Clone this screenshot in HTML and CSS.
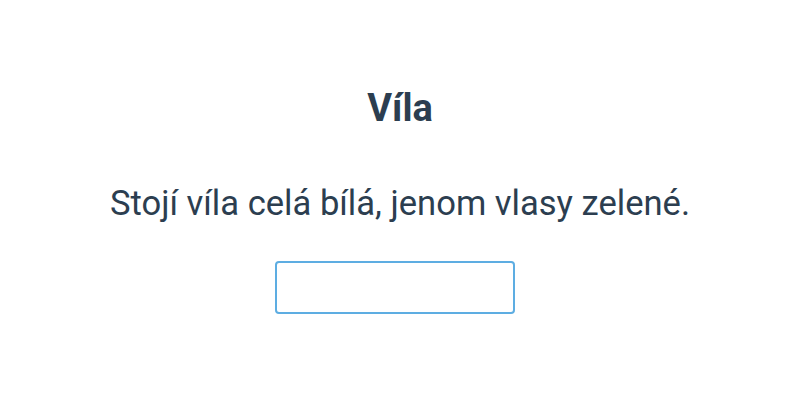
FILE: index.html
```html
<!DOCTYPE html>
<html>
<head>
<meta charset="utf-8">
<link rel="stylesheet" href="styles.css">
</head>
<body>
<div class="page">
  <h1 class="title">Víla</h1>
  <p class="text">Stojí víla celá bílá, jenom vlasy zelené.</p>
  <input class="answer" type="text">
</div>
</body>
</html>
```
FILE: styles.css
```css
html, body { margin: 0; padding: 0; background: #fff; }
.page {
  font-family: Roboto, "Liberation Sans", sans-serif;
  color: #2c3e50;
  display: flex;
  flex-direction: column;
  align-items: center;
  padding-top: 86px;
}
.title {
  margin: 0;
  font-size: 38px;
  font-weight: 700;
  line-height: 44px;
}
.text {
  margin: 53px 0 0 0;
  font-size: 34.6px;
  line-height: 40px;
}
.answer {
  margin: 38px 11px 0 0;
  width: 240px;
  height: 53px;
  box-sizing: border-box;
  border: 2px solid #5dade2;
  border-radius: 4px;
  outline: none;
  background: #fff;
}
```
